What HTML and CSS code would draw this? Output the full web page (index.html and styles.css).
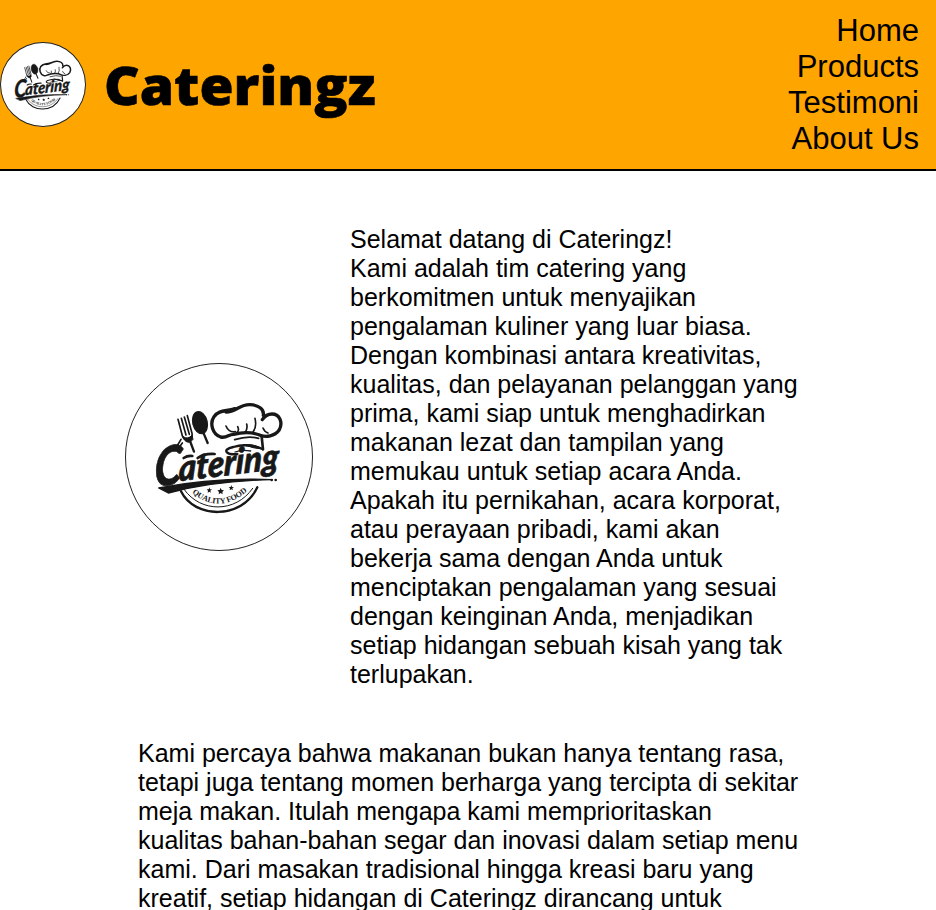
FILE: index.html
```html
<!DOCTYPE html>
<html lang="id">
<head>
<meta charset="utf-8">
<title>Cateringz</title>
<link rel="stylesheet" href="styles.css">
</head>
<body>
<svg class="defs" aria-hidden="true">
  <symbol id="logo" viewBox="18 26 558 558">
    <g fill="none" stroke="#181818" stroke-linecap="round" stroke-linejoin="round">
      <path d="M174 192L187 241Q191 255 207 251Q219 247 216 234L202 181M184 189L198 239M193 185L208 237" stroke-width="5"/>
      <path d="M189 244Q205 254 216 239L219 252Q213 261 205 261Q192 258 189 244Z" fill="#181818" stroke-width="3"/>
      <path d="M210 257L222 289M251 234L263 263" stroke-width="7"/>
      <ellipse cx="240" cy="202" rx="22" ry="34" transform="rotate(-14 240 202)" fill="#181818" stroke-width="3"/>
      <path d="M173 269L183 252M180 273L187 263" stroke-width="5"/>
      <path d="M345 160C316 169 298 163 282 184C268 205 278 237 302 245C321 249 325 237 341 237C368 230 397 230 421 240C438 246 464 243 477 225C491 200 477 176 456 176C443 176 433 184 427 193M318 170C350 169 358 147 390 148C415 149 433 161 430 180" stroke-width="10"/>
      <path d="M318 212Q326 232 346 229M353 214Q359 226 350 232M380 206Q384 222 374 232M405 189Q411 216 399 230M429 218Q433 229 444 233" stroke-width="5"/>
      <path d="M425 244L429 282" stroke-width="8"/>
      <path d="M344 253Q385 240 416 249" stroke-width="5"/>
      <path d="M428 281Q380 262 340 275Q312 282 321 291Q329 299 352 296" stroke-width="7"/>
      <path d="M372 268Q400 264 428 281Q400 280 372 268Z" fill="#181818" stroke-width="3"/>
      <path d="M345 290Q365 282 392 287" stroke-width="4"/>
      <path d="M183 408C223 490 365 495 412 396" stroke-width="7"/>
      <path d="M193 403C242 472 346 474 398 399" stroke-width="3"/>
      <path d="M116 398Q279 366 457 373Q284 376 145 413Z" fill="#181818" stroke-width="4"/>
      <path d="M191 308Q203 300 217 302" stroke-width="8"/>
      <path d="M233 308Q252 294 284 296" stroke-width="8"/>
    </g>
    <g class="script" transform="translate(102 395) rotate(-7) skewX(-9)">
      <text class="initial" x="0" y="0" textLength="82" lengthAdjust="spacingAndGlyphs">C</text>
      <text class="rest" x="74" y="-8" textLength="302" lengthAdjust="spacingAndGlyphs">atering</text>
    </g>
    <path id="logo-arc" d="M216 412Q300 484 392 399" fill="none"/>
    <text class="motto"><textPath href="#logo-arc" textLength="184">QUALITY FOOD</textPath></text>
    <g fill="#181818">
      <path d="M302 397L305 404L312 405L307 410L308 417L302 413L296 417L297 410L292 405L299 404Z"/>
      <path d="M268 396L270 402L276 402L271 406L273 412L268 409L263 412L264 406L260 402L266 402Z"/>
      <path d="M334 389L336 395L342 395L337 399L339 405L334 402L329 405L330 399L326 395L332 395Z"/>
      <circle cx="455" cy="374" r="4"/><circle cx="467" cy="374" r="4"/>
    </g>
  </symbol>
</svg>
<header class="header">
  <a class="brand">
    <svg class="logo brand-logo" role="img"><use href="#logo"/></svg>
    <h1 class="brand-name"><span>Cateringz</span></h1>
  </a>
  <nav class="nav"><a>Home</a><a>Products</a><a>Testimoni</a><a>About Us</a></nav>
</header>
<main class="content">
  <section class="intro">
    <svg class="logo intro-logo" role="img"><use href="#logo"/></svg>
    <p>Selamat datang di Cateringz!<br>Kami adalah tim catering yang berkomitmen untuk menyajikan pengalaman kuliner yang luar biasa. Dengan kombinasi antara kreativitas, kualitas, dan pelayanan pelanggan yang prima, kami siap untuk menghadirkan makanan lezat dan tampilan yang memukau untuk setiap acara Anda. Apakah itu pernikahan, acara korporat, atau perayaan pribadi, kami akan bekerja sama dengan Anda untuk menciptakan pengalaman yang sesuai dengan keinginan Anda, menjadikan setiap hidangan sebuah kisah yang tak terlupakan.</p>
  </section>
  <p class="story">Kami percaya bahwa makanan bukan hanya tentang rasa, tetapi juga tentang momen berharga yang tercipta di sekitar meja makan. Itulah mengapa kami memprioritaskan kualitas bahan-bahan segar dan inovasi dalam setiap menu kami. Dari masakan tradisional hingga kreasi baru yang kreatif, setiap hidangan di Cateringz dirancang untuk</p>
</main>
</body>
</html>
```
FILE: styles.css
```css
* { box-sizing: border-box; }
body {
  margin: 0;
  height: 910px;
  overflow: hidden;
  background: #fff;
  color: #000;
  font-family: "Liberation Sans", Arial, sans-serif;
}
.defs { position: absolute; width: 0; height: 0; }
.header {
  display: flex;
  justify-content: space-between;
  align-items: center;
  height: 171px;
  padding-right: 17px;
  background: orange;
  border-bottom: 2px solid #000;
}
.logo { flex: none; background: #fff; border: 1px solid #222; border-radius: 50%; }
.brand { display: flex; align-items: center; }
.brand-logo { width: 86px; height: 85px; }
.brand-name {
  margin: 0 0 0 18px;
  font: 800 53px/80px "Open Sans", sans-serif;
  -webkit-text-stroke: 0.6px #000;
}
.brand-name span { display: inline-block; transform: scaleX(1.04); transform-origin: left; }
.nav {
  display: flex;
  flex-direction: column;
  align-items: flex-end;
  font-size: 31px;
  line-height: 36px;
}
.content { padding: 54px 0 0 125px; font-size: 25px; line-height: 29px; }
.intro { display: flex; align-items: center; gap: 37px; }
.intro-logo { width: 188px; height: 188px; }
.intro p { margin: 0; width: 450px; }
.story { margin: 50px 0 0 13px; width: 662px; }
.script { fill: #181818; stroke: #181818; stroke-width: 2px; font-family: Lato, sans-serif; font-weight: 900; font-style: italic; }
.initial { font-size: 162px; }
.rest { font-size: 108px; }
.motto { fill: #181818; font: 700 24px "Liberation Serif", serif; }
```
